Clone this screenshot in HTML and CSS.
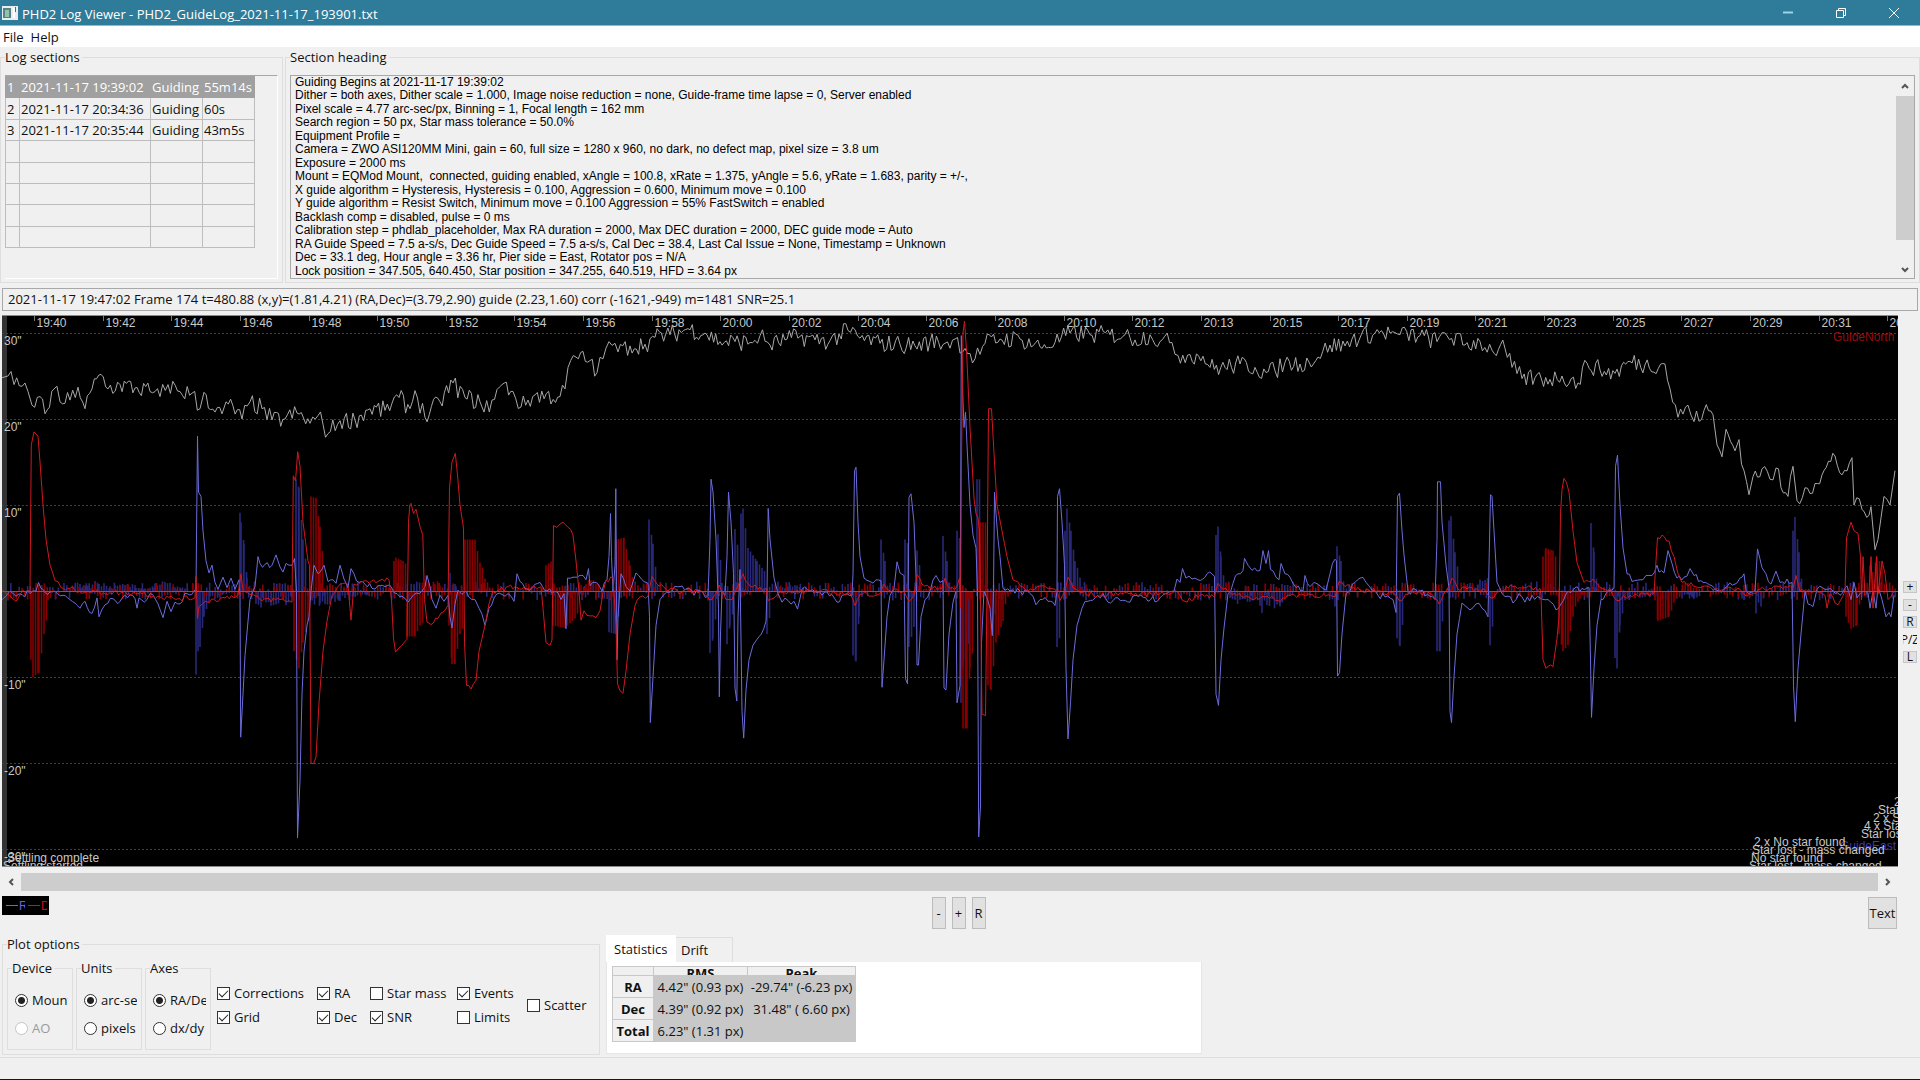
FILE: index.html
```html
<!DOCTYPE html>
<html lang="en">

<head>
    <meta charset="UTF-8">
    <meta name="viewport" content="width=device-width, initial-scale=1.0">
    <title>PHD2 Log Viewer</title>
    <link rel="stylesheet" href="styles.css">
</head>

<body>
    <header class="titlebar">
        <svg class="app-icon" width="16" height="16" viewBox="0 0 16 16">
            <rect x="0" y="1" width="16" height="14" fill="#e8eef0"/>
            <rect x="1" y="3" width="8" height="10" fill="#5c7f86"/>
            <rect x="3" y="5" width="4" height="7" fill="#8fc4a8"/>
            <rect x="11" y="3" width="2" height="10" fill="#fff"/>
            <rect x="13" y="2" width="1" height="5" fill="#4a6a78"/>
        </svg>
        <h1>PHD2 Log Viewer - PHD2_GuideLog_2021-11-17_193901.txt</h1>
        <div class="window-buttons">
            <button aria-label="Minimize"><svg width="12" height="12"><path d="M1 5.5h10" stroke="#9fd3e6" stroke-width="2"/></svg></button>
            <button aria-label="Restore"><svg width="12" height="12" fill="none" stroke="#fff"><path d="M3.5 3V1.5h7v7H9M1.5 3.5h7v7h-7z"/></svg></button>
            <button aria-label="Close"><svg width="12" height="12"><path d="M1 1l10 10M11 1L1 11" stroke="#fff"/></svg></button>
        </div>
    </header>

    <nav class="menubar">
        <a href="#file">File</a>
        <a href="#help">Help</a>
    </nav>

    <main>
        <div class="top-row">
            <fieldset class="group sections">
                <legend>Log sections</legend>
                <div class="sections-list">
                    <table class="sections-table">
                        <tr class="selected"><td>1</td><td>2021-11-17 19:39:02</td><td>Guiding</td><td>55m14s</td></tr>
                        <tr><td>2</td><td>2021-11-17 20:34:36</td><td>Guiding</td><td>60s</td></tr>
                        <tr><td>3</td><td>2021-11-17 20:35:44</td><td>Guiding</td><td>43m5s</td></tr>
                        <tr><td></td><td></td><td></td><td></td></tr>
                        <tr><td></td><td></td><td></td><td></td></tr>
                        <tr><td></td><td></td><td></td><td></td></tr>
                        <tr><td></td><td></td><td></td><td></td></tr>
                        <tr><td></td><td></td><td></td><td></td></tr>
                    </table>
                </div>
            </fieldset>

            <fieldset class="group heading">
                <legend>Section heading</legend>
                <div class="heading-box">
                    <div class="heading-text">
                        <p>Guiding Begins at 2021-11-17 19:39:02</p>
                        <p>Dither = both axes, Dither scale = 1.000, Image noise reduction = none, Guide-frame time lapse = 0, Server enabled</p>
                        <p>Pixel scale = 4.77 arc-sec/px, Binning = 1, Focal length = 162 mm</p>
                        <p>Search region = 50 px, Star mass tolerance = 50.0%</p>
                        <p>Equipment Profile =</p>
                        <p>Camera = ZWO ASI120MM Mini, gain = 60, full size = 1280 x 960, no dark, no defect map, pixel size = 3.8 um</p>
                        <p>Exposure = 2000 ms</p>
                        <p>Mount = EQMod Mount,&nbsp; connected, guiding enabled, xAngle = 100.8, xRate = 1.375, yAngle = 5.6, yRate = 1.683, parity = +/-,</p>
                        <p>X guide algorithm = Hysteresis, Hysteresis = 0.100, Aggression = 0.600, Minimum move = 0.100</p>
                        <p>Y guide algorithm = Resist Switch, Minimum move = 0.100 Aggression = 55% FastSwitch = enabled</p>
                        <p>Backlash comp = disabled, pulse = 0 ms</p>
                        <p>Calibration step = phdlab_placeholder, Max RA duration = 2000, Max DEC duration = 2000, DEC guide mode = Auto</p>
                        <p>RA Guide Speed = 7.5 a-s/s, Dec Guide Speed = 7.5 a-s/s, Cal Dec = 38.4, Last Cal Issue = None, Timestamp = Unknown</p>
                        <p>Dec = 33.1 deg, Hour angle = 3.36 hr, Pier side = East, Rotator pos = N/A</p>
                        <p>Lock position = 347.505, 640.450, Star position = 347.255, 640.519, HFD = 3.64 px</p>
                    </div>
                    <div class="vscroll">
                        <svg width="18" height="20"><path d="M6 12l3-3 3 3" fill="none" stroke="#555" stroke-width="2"/></svg>
                        <div class="vthumb"></div>
                        <svg width="18" height="20"><path d="M6 9l3 3 3-3" fill="none" stroke="#555" stroke-width="2"/></svg>
                    </div>
                </div>
            </fieldset>
        </div>

        <div class="frame-info">2021-11-17 19:47:02 Frame 174 t=480.88 (x,y)=(1.81,4.21) (RA,Dec)=(3.79,2.90) guide (2.23,1.60) corr (-1621,-949) m=1481 SNR=25.1</div>

        <div class="plot-row">
            <div class="plot-column">
                <div class="plot"><svg id="graph" class="graph"></svg></div>
                <div class="hscroll">
                    <svg width="19" height="18"><path d="M11 6L8 9l3 3" fill="none" stroke="#555" stroke-width="2"/></svg>
                    <div class="hthumb"></div>
                    <svg width="20" height="18"><path d="M8 6l3 3-3 3" fill="none" stroke="#555" stroke-width="2"/></svg>
                </div>
                <div class="toolbar">
                    <div class="legend-box">
                        <span class="legend-item ra">RA</span>
                        <span class="legend-item dec">Dec</span>
                    </div>
                    <div class="zoom-buttons">
                        <button class="btn">-</button>
                        <button class="btn">+</button>
                        <button class="btn">R</button>
                    </div>
                    <button class="btn btn-text">Text</button>
                </div>
            </div>
            <div class="side-buttons">
                <button>+</button>
                <button>-</button>
                <button>R</button>
                <button class="flat">P/Z</button>
                <button>L</button>
            </div>
        </div>

        <div class="bottom-row">
            <fieldset class="group options">
                <legend>Plot options</legend>
                <div class="options-body">
                    <fieldset class="group radios">
                        <legend>Device</legend>
                        <label><input type="radio" name="device" checked>Mount</label>
                        <label class="disabled"><input type="radio" name="device" disabled>AO</label>
                    </fieldset>
                    <fieldset class="group radios">
                        <legend>Units</legend>
                        <label><input type="radio" name="units" checked>arc-sec</label>
                        <label><input type="radio" name="units">pixels</label>
                    </fieldset>
                    <fieldset class="group radios">
                        <legend>Axes</legend>
                        <label><input type="radio" name="axes" checked>RA/Dec</label>
                        <label><input type="radio" name="axes">dx/dy</label>
                    </fieldset>
                    <div class="checks">
                        <label><input type="checkbox" checked>Corrections</label>
                        <label><input type="checkbox" checked>RA</label>
                        <label><input type="checkbox">Star mass</label>
                        <label><input type="checkbox" checked>Events</label>
                        <label class="scatter"><input type="checkbox">Scatter</label>
                        <label><input type="checkbox" checked>Grid</label>
                        <label><input type="checkbox" checked>Dec</label>
                        <label><input type="checkbox" checked>SNR</label>
                        <label><input type="checkbox">Limits</label>
                    </div>
                </div>
            </fieldset>

            <div class="notebook">
                <div class="tabs">
                    <button class="tab active">Statistics</button>
                    <button class="tab">Drift</button>
                </div>
                <div class="tab-panel">
                    <table class="stats">
                        <thead>
                            <tr><th></th><th><div>RMS</div></th><th><div>Peak</div></th></tr>
                        </thead>
                        <tbody>
                            <tr><th>RA</th><td>4.42" (0.93 px)</td><td>-29.74" (-6.23 px)</td></tr>
                            <tr><th>Dec</th><td>4.39" (0.92 px)</td><td>31.48" ( 6.60 px)</td></tr>
                            <tr><th>Total</th><td>6.23" (1.31 px)</td><td></td></tr>
                        </tbody>
                    </table>
                </div>
            </div>
        </div>
    </main>

    <footer class="statusbar"></footer>

    <script src="graph.js"></script>
</body>

</html>
```

FILE: styles.css
```css
:root {
    --face: #f0f0f0;
    --line: #dedede;
    --grey: #a8a8a8;
    --title: #2e7c9a;
}

* {
    box-sizing: border-box;
}

body {
    margin: 0;
    min-height: 100vh;
    display: flex;
    flex-direction: column;
    background: var(--face);
    font-family: 'Open Sans', 'Noto Sans', sans-serif;
    font-size: 13px;
    line-height: 20px;
    color: #111;
    overflow: hidden;
}

button {
    font: inherit;
    color: inherit;
    padding: 0;
    border: none;
    background: none;
}

svg {
    display: block;
}

/* title and menu */
.titlebar {
    height: 26px;
    display: flex;
    align-items: center;
    background: var(--title);
    border-bottom: 1px solid #8fbccc;
    padding-left: 2px;
}

.titlebar h1 {
    flex: 1;
    margin: 2px 0 0 4px;
    font-size: 13px;
    font-weight: 400;
    color: #fff;
}

.window-buttons {
    display: flex;
}

.window-buttons button {
    width: 53px;
    height: 25px;
    display: flex;
    align-items: center;
    justify-content: center;
}

.menubar {
    display: flex;
    gap: 7px;
    height: 21px;
    padding: 1px 0 0 3px;
    background: #fff;
}

.menubar a {
    color: #111;
    text-decoration: none;
}

main {
    flex: 1;
}

/* group boxes */
.group {
    min-width: 0;
    margin: 0;
    border: 1px solid var(--line);
    padding: 8px 4px 3px;
}

.group legend {
    height: 20px;
    padding: 0 2px 0 0;
}

.top-row {
    display: flex;
    gap: 2px;
}

.sections {
    width: 283px;
}

.heading {
    flex: 1;
}

.sections-list {
    height: 204px;
    border-top: 1px solid var(--grey);
    border-right: 1px solid #fff;
    border-bottom: 1px solid #fff;
}

.sections-table {
    width: 250px;
    height: 172px;
    table-layout: fixed;
    border-collapse: collapse;
    white-space: nowrap;
}

.sections-table td {
    height: 21px;
    border: 1px solid #bdbdbd;
    padding: 0 1px;
    line-height: 18px;
}

.sections-table td:nth-child(1) {
    width: 14px;
}

.sections-table td:nth-child(2) {
    width: 131px;
}

.sections-table td:nth-child(3) {
    width: 52px;
}

.sections-table .selected td {
    background: #a0a0a0;
    border-color: #a0a0a0;
    color: #fff;
}

.heading-box {
    display: flex;
    height: 204px;
    border: 1px solid var(--grey);
}

.heading-text {
    flex: 1;
    display: grid;
    grid-auto-rows: 1fr;
    padding-left: 4px;
    font-family: 'Liberation Sans', Arial, sans-serif;
    font-size: 12px;
    line-height: 13px;
    white-space: nowrap;
    color: #000;
}

.heading-text p {
    margin: 0;
}

.vscroll {
    width: 18px;
}

.vthumb {
    height: 144px;
    background: #cdcdcd;
}

.vscroll svg:last-child {
    margin-top: 19px;
}

.frame-info {
    height: 23px;
    margin: 5px 2px 4px;
    padding-left: 5px;
    border: 1px solid var(--grey);
    line-height: 21px;
}

/* graph */
.plot-row {
    display: flex;
    align-items: center;
    padding: 0 3px 0 2px;
}

.plot-column {
    flex: 1;
    min-width: 0;
}

.plot {
    border-top: 1px solid #8a8a8a;
    border-bottom: 1px solid #8a8a8a;
    background: #000;
}

.graph {
    width: 100%;
    height: 550px;
    font-family: 'Liberation Sans', Arial, sans-serif;
    font-size: 12px;
}

.hscroll {
    display: flex;
    margin: 6px 0 5px;
}

.hthumb {
    flex: 1;
    background: #cdcdcd;
}

.toolbar {
    display: flex;
    justify-content: space-between;
    align-items: flex-start;
    height: 33px;
    padding-right: 1px;
}

.legend-box {
    display: flex;
    gap: 3px;
    width: 47px;
    height: 19px;
    padding-left: 4px;
    background: #000;
    font-family: 'Liberation Sans', Arial, sans-serif;
    font-size: 12px;
    overflow: hidden;
}

.legend-item {
    display: flex;
    align-items: center;
    flex: none;
    width: 19px;
    overflow: hidden;
}

.legend-item::before {
    content: "";
    flex: none;
    width: 12px;
    height: 1px;
    margin-right: 1px;
    background: currentColor;
}

.ra {
    color: #6464e6;
}

.dec {
    color: #c81414;
}

.zoom-buttons {
    display: flex;
    gap: 6px;
}

.btn {
    width: 14px;
    height: 32px;
    margin-top: 1px;
    background: #e1e1e1;
    border: 1px solid #bcbcbc;
}

.btn-text {
    width: 29px;
}

.side-buttons {
    display: flex;
    flex-direction: column;
    justify-content: space-between;
    width: 14px;
    height: 82px;
    margin-left: 5px;
}

.side-buttons button {
    display: flex;
    align-items: center;
    justify-content: center;
    height: 12px;
    background: #e1e1e1;
    border: 1px solid #c6c6c6;
    font-size: 12px;
    line-height: 12px;
    overflow: hidden;
}

.side-buttons .flat {
    background: none;
    border: none;
}

/* options */
.bottom-row {
    display: flex;
    gap: 6px;
    padding: 5px 2px 1px;
}

.options {
    width: 598px;
    height: 121px;
    padding-top: 4px;
}

.options-body {
    display: flex;
    align-items: center;
    gap: 3px;
}

.radios {
    display: flex;
    flex-direction: column;
    gap: 10px;
    width: 66px;
    height: 92px;
    padding-top: 13px;
}

.radios label,
.checks label {
    display: flex;
    align-items: center;
    line-height: 18px;
    white-space: nowrap;
}

.radios label {
    margin-left: 3px;
    overflow: hidden;
}

.radios .disabled {
    color: #9a9a9a;
}

input {
    appearance: none;
    flex: none;
    width: 13px;
    height: 13px;
    margin: 0 4px 0 0;
    background: #fff;
    border: 1px solid #333;
}

input[type="radio"] {
    border-radius: 50%;
}

input[type="radio"]:checked {
    background: radial-gradient(circle, #222 3px, #fff 4px);
}

input:disabled {
    border-color: #c4c4c4;
}

input[type="checkbox"]:checked::after {
    content: "";
    display: block;
    width: 8px;
    height: 4px;
    margin: 2px 0 0 1px;
    border-left: 1px solid #222;
    border-bottom: 1px solid #222;
    transform: rotate(-45deg);
}

.checks {
    display: grid;
    grid-template-columns: 100px 53px 87px 70px auto;
    row-gap: 6px;
    margin: 2px 0 0 3px;
}

.scatter {
    grid-column: 5;
    grid-row: 1 / span 2;
}

.notebook {
    width: 596px;
}

.tabs {
    display: flex;
    align-items: flex-end;
    height: 28px;
}

.tab {
    width: 57px;
    height: 25px;
    padding-left: 5px;
    border: 1px solid var(--line);
    border-left: none;
    border-bottom: none;
    text-align: left;
}

.tab.active {
    width: 70px;
    height: 27px;
    padding-left: 8px;
    border: none;
    background: #fff;
}

.tab-panel {
    height: 92px;
    padding: 4px 5px;
    background: #fff;
    border: 1px solid #e6e6e6;
    border-top: none;
}

.stats {
    width: 244px;
    table-layout: fixed;
    border-collapse: collapse;
    text-align: center;
    white-space: nowrap;
}

.stats th,
.stats td {
    height: 22px;
    padding: 0;
    border: 1px solid #c8c8c8;
    line-height: 20px;
}

.stats th {
    background: var(--face);
}

.stats th:nth-child(1) {
    width: 41px;
}

.stats th:nth-child(2) {
    width: 94px;
}

.stats td {
    background: #c8c8c8;
}

.stats thead th {
    height: 9px;
}

.stats thead div {
    height: 8px;
    line-height: 12px;
    overflow: hidden;
}

.statusbar {
    height: 23px;
    border-top: 1px solid var(--line);
    border-bottom: 1px solid #111820;
}
```

FILE: graph.js
```js
const NS = 'http://www.w3.org/2000/svg';
const graph = document.getElementById('graph');

const LEFT = 2;         // frame position of the left edge
const ZERO_Y = 275;     // y of the 0" line
const SCALE = 8.6;      // pixels per arc-second
const FRAME = 1.4;      // pixels per guide frame

const toX = x => (x - LEFT).toFixed(1);
const toY = v => (ZERO_Y - v * SCALE).toFixed(1);

// small repeatable generator for frame to frame jitter
let seed = 7;
function jitter() {
    seed = (seed * 16807) % 2147483647;
    return seed / 2147483647 * 2 - 1;
}

function add(name, attrs, text) {
    const el = document.createElementNS(NS, name);
    for (const key in attrs) el.setAttribute(key, attrs[key]);
    if (text) el.textContent = text;
    graph.appendChild(el);
}

const toPairs = s => s.trim().split(/\s+/).map(p => p.split(',').map(Number));

// guide star SNR
const snr = `2,24.8 8,25 14,24 22,23.8 28,23.2 32,21.6 40,22.6 45,20.6 54,23.5 60,22 70,22.2 78,23.7 85,21.2 92,23.5
101,25.2 108,23.5 120,24 135,23.6 150,23.2 160,22.6 168,24 180,23.2 192,23 200,21.2 204,23.1 215,20.8 222,20.6 226,22
242,20 250,22 262,21.2 272,19.9 285,20 297,20.7 310,19.5 318,20.4 328,18.3 340,19.8 355,19.9 370,21.2 385,21 399,22.5
410,21.2 415,23.3 425,20.2 440,22 453,24.2 465,22.5 480,22 484,20.8 492,22.2 502,24 513,23.2 521,21.4 535,22.8 560,22.6
565,23.5 568,26 576,27.2 590,26.8 597,25.4 603,27 609,29 615,28.8 618,27.8 630,28.5 645,28.7 655,29.5 670,29.8 688,30.5
705,30 720,29 735,29 750,28.9 760,29.7 770,28.6 785,29.2 800,29.6 815,29.2 830,29.1 848,30.3 860,29.4 880,28.8 900,28.7
915,28.5 930,29 945,28.8 955,29.3 965,28.2 975,27 985,28.8 1000,29.3 1020,29.3 1040,28.4 1055,28.9 1070,30 1090,29.8
1110,29.8 1125,29.8 1135,29.2 1150,29.8 1160,29 1172,28.9 1178,27.4 1190,27.5 1203,27.3 1210,26 1225,26 1240,26.4
1255,26 1266,25.4 1275,25.6 1285,26.6 1300,26.4 1318,27.2 1330,28.6 1345,28.5 1352,29.3 1375,30 1390,30 1400,29.8
1420,29.7 1437,29 1445,30 1465,28.6 1480,29 1492,28 1505,28.2 1512,26 1522,24.7 1535,24.8 1550,24.6 1562,25 1578,24.2
1587,26.5 1600,25.7 1615,25.3 1630,26.7 1645,26.3 1665,26.4 1670,23.5 1678,20.2 1688,21.6 1694,19.7 1704,21 1713,20.5
1717,17 1722,15.6 1726,18.8 1735,16.3 1739,17.6 1744,14 1749,11.2 1753,13.3 1762,14.2 1770,13 1776,14.3 1781,12
1788,11 1793,14.5 1797,10.5 1805,12 1815,12.5 1822,13.5 1835,15.7 1842,13.5 1852,15.5 1854,10 1862,9.5 1869,8.8 1871,9.8
1875,4.8 1878,6 1884,11 1890,10 1895,14`;

// RA error
const ra = `2,-1 6,-.6 10,0 16,-.6 22,-.4 30,-.3 36,0 38.5,1 41,.3 50,-.1 55,0 63,-.5 70,-1 80,-2 85,-1.2 92,-2.6 97,-.8
99,-3 105,-1.6 113,-.9 120,-1.2 125,-.5 135,-.9 137,-2 139,-.8 147,-1 150,-.3 158,-1.5 163,-3.1 167,-1.2 171,-2.4
175,-1.3 180,-1.5 187,-.3 194,0 196,.2 197.5,18 198.5,11.5 201,11 203,7 206,3.5 209,2.1 212,3 215,1 218,.2 223,1.6
227,.4 231,1.5 235,.2 239,1.3 240,-.5 240.7,-17 243,-12 245,-7.5 248,-3.5 250,-1 253,0 255,.5 258,4 260,3.2 265,3.1
272,3 276,4.2 280,2.8 283,2.2 286,3.2 292,3 294.5,3.8 296.5,0 297.5,-28.7 300,-22 302,-12 304,-7 307,-4 309,-3 311,0
314,3 318,2 324,3 328,1.1 333,1.3 336,.9 340,3 344,1.4 348,.4 351,2.6 354,2 359,1 365,.8 372,.3 378,.6 385,.5 392,.3
397,-.3 402,-.6 408,-1.3 414,-.4 422,0 425,.5 427,1.8 430,.5 432,-1 436,-2 440,-.5 444,-1.2 448,-.5 450,-3 452,-4.3
455,-1.5 458,.1 462,-.4 466,0 472,-1 475,-1 479,-2 482,-2.7 485,-4 489,-2 494,-.8 502,-.4 508,-.3 514,-1.2 517,2
520,1.1 525,.3 532,.3 540,1 547,0 555,0 561,-1 564,-.3 566,-4.4 567.5,1.5 573,1.6 577,1.6 583,1.8 586,1.3 588.5,2.6
590,.6 595,1 602,0 607,1.3 609,4 610.5,9 611.5,4 613,0 615,3 615.8,11.9 617,-8 618,-3 621,2 626,.5 630,0 636,2.1
644,1.1 648,.9 649.5,-3 650.3,-15.3 653,-10 656,-4 660,-1 664,-.4 672,0 680,.5 687,.3 694,-.5 700,0 708,-.6 710,6
711,13 713,11.5 716,6 718.5,-2 719.3,-12.3 720.5,-5 722,0 725,-.5 727,4 728.5,11.5 731,8 733.5,2 735,-11.3 736.8,-12.8
738,-3 740,2.5 742,-14 743.7,-17.1 746,-11.5 749,-8 753,-6.3 759,-5.3 766,-3.5 767,0 768.2,9.6 770,6 774,1.5 778,-.3
782,-1.3 788,-1.1 794,-1.2 797.5,-2.1 802,.2 810,0 822,-.5 832,-.4 837,-1.3 842,-.5 852,-.5 853,2 854.5,14 856,14.4
858,8 860,4 864,1.5 870,1.1 876,1.3 881,1.2 882,-11.2 884,-8 887,-3 890,-.5 894,.3 897,3.4 900,2.1 904,1.8 905.5,-10.2
907.5,-10.8 909,10.9 911,11.3 914,8 916.5,0 917,-8.6 918.5,-8.6 921,-3 925,-1 930,0 936,1.8 940,1 943,1.2 944,-11.3
946,-11.5 949,-5 953,-1.3 956,0 957,-13 960,-11 961.3,29.7 963,22 964,19 965.5,20.8 967,17 970,10 973,6.5 976,5
977.5,0 978.7,-28.6 980.5,-25 981.5,-6 984,0 987,-.8 990,-2 992.3,-5.2 993.5,0 994.5,11.5 996,9 998,6 1000,4 1003,.3
1010,0 1020,0 1030,-.3 1036,-1.6 1040,-1 1048,-1.2 1055,-1.7 1057,0 1057.5,11 1059.5,11.9 1062,8 1064.5,3 1066,-9
1068,-17.2 1070.5,-13 1073,-8 1077,-4 1082,-2 1088,-1.2 1095,-.8 1103,-.3 1108,-1.3 1118,-.8 1130,-1.3 1136,-.5
1148,-1.2 1160,-.8 1174,0 1177,1.4 1180,1 1182.5,2.6 1186,1.5 1192,1.4 1198,1.3 1205,1.6 1212,2 1214.5,1.7 1216,-12
1218.5,-13.3 1221,-8 1224,-4.3 1228,-.3 1233,.9 1238,2 1243,2.4 1244.5,3.8 1248,3 1252,2.4 1260,2.4 1263,4.7 1266,3.2
1268.5,4.7 1270.5,2.5 1276,1.6 1279,1.3 1281,3.2 1285,2 1290,1.6 1296,.4 1303,0 1305,1.8 1310,.5 1314,1 1320,.6
1326,.1 1330,2 1335,3.7 1336.5,3.5 1337.5,-9.9 1339.5,-9.5 1342,-5 1346,-.3 1350,0 1355,1 1360,1.5 1366,1 1372,.1
1378,-.5 1385,-.7 1393,-1 1396,-2.5 1397.5,11 1399.5,11.4 1402,7 1404,4.2 1408,0 1420,0 1430,-.6 1435,-1 1437,6
1437.5,12.7 1440.5,12.7 1442,8 1446,3 1449,.3 1450,-14 1451.5,-15.3 1454,-10 1457,-5 1462,-1.4 1466,-1.8 1470,-2.2
1476,-1.5 1482,-2 1488,-3 1489,3 1490.5,11.2 1492,11 1495,5 1497,1 1502,-.3 1508,-.6 1513,-1.4 1519,-.3 1525,-1.3
1532,-.5 1540,-.8 1548,-1 1556,-2.2 1561,-1.5 1568,0 1575,.4 1582,.3 1589,.4 1590.5,-8 1591.5,-14.7 1594,-9 1597,-4
1601,-1 1608,0 1614,.3 1615.5,14.5 1617.5,15.8 1620,10 1623,5 1627,2 1632,1.1 1640,1.3 1646,1.8 1652,1.8 1657,3
1659,2.2 1664,2.1 1668,4.7 1672,3.2 1677,1.5 1684,1.6 1690,2.6 1694,1.8 1703,1 1712,.6 1719,0 1727,.5 1735,.8
1742,1.6 1744,2 1746,0 1749,-.3 1755,0 1757.5,4.9 1762,2.7 1766,2 1771,.8 1776,2.3 1780,1 1787,1.4 1792,1 1793.5,-11
1795.3,-15.2 1798,-9 1801,-5 1805,0 1808,-1.5 1813,-1.8 1817,.2 1825,.2 1833,0 1840,-.5 1847,.6 1851,-1 1854,1
1857,-.8 1860,-.3 1864,0 1868,-.2 1870,-2 1873,0 1876,-2 1878,.5 1882,-1 1886,-3 1889,-2.5 1891,-3 1894,-.5`;

// Dec error
const dec = `2,.2 8,-.4 12,-.8 16,-1.2 21,-.2 30,0 31.3,17 34,18.5 38,18 40,15 43,10 46,6 50,3 55,1.2 61,.4 70,.3 80,0
110,-.2 140,-.2 160,-.7 180,-.9 195,-.8 196,1.7 197.5,-3.2 199,-1.8 205,-1.2 225,-.8 238,-.4 241,2 243,0 260,-1 280,-1
292,-1.3 293.3,13.4 295.5,12.8 297.7,16.2 300,14.5 303,8 308,3.5 309.5,3 311,-20 313.5,-20.1 316,-19.3 319,-13 323,-7
327,-3.5 332,-.5 340,.8 348,.7 351,-3.4 354,.8 365,1.2 378,1.1 389,1.3 391.5,-1 393.5,-5.5 395.5,-7.1 399,-6.6 404,-6
407,-5.6 408.5,8 409.8,10 411,10.2 413.5,9 416,9.5 420,7.5 422.8,6.5 424.5,-1 427,-3.6 431,-3.9 438,-3.2 444,-2.4
448,-1.7 449.5,12 452,15 455.3,16 457.5,13.5 460,10 463.5,7.3 464.5,-6 466.5,-11 471,-11.4 476,-10.4 479,-7 485,-4
489,-1.5 493,0 515,.5 530,.2 541,.5 543,-2 546,-6 550,-6.3 552,-5.7 553.5,7.6 557,7.4 563,8 568,7.4 573,6.5 576,3.5
579,0 581,-3.4 584,-2.3 590,-2.9 596,-3.1 600,-2.3 603,-.2 606,1.3 613,1.5 616,-4 617.5,-10.8 620,-11.6 623,-11.9
626,-9.3 630,-5 635,-1.7 640,-.7 648,-.6 652,1.7 657,.8 668,0 700,0 709,-1 712,-1 719,.7 726,-1 732,-1 743,2 748,.9
760,.4 766,.3 768,-1.1 773,-.9 778,-.3 810,0 850,-.3 855,-1.7 860,-.4 880,-.3 884,.8 890,0 904,0 909,-1.2 914,-.5
917,1.9 922,.8 930,.3 942,.3 945,1.5 950,.3 957,.5 959.5,1.5 960.5,-2 961.5,15 963,30 964.5,31.4 966.5,28 970,19
974,10.8 976,9 978,8.5 979.5,7 981,-5 982,-14.3 985.5,-14.5 987,0 988.5,21.2 991.5,21.2 994,16 997,10 1002,7 1007,4
1013,1.3 1020,.6 1028,0 1042,.6 1055,.2 1060,-1.1 1065,0 1068,1.6 1073,.4 1082,-.2 1100,-.6 1120,-.2 1140,-.4
1160,-.3 1175,0 1185,-1.2 1200,-.5 1214,-.7 1218,.9 1223,.2 1235,-.3 1250,-.8 1265,-.7 1278,-1.1 1290,-.5 1310,-.4
1335,-.7 1339,1.1 1345,.5 1360,.1 1380,0 1394,-.3 1399,-1.1 1410,0 1430,-.3 1439,-1.5 1446,0 1452,1.5 1458,.2
1485,.1 1491,-.8 1500,0 1515,.6 1540,.3 1541,-.5 1543,-8 1546,-9 1553,-8.8 1557,-5.5 1559,-3 1560.5,9 1562,11.8
1564,13.1 1569,11.5 1573,7 1577,3.3 1584,1 1593,1.4 1600,.4 1610,.3 1617,-1.1 1630,-.5 1654,-.3 1656,3.5 1657.5,6.2
1662,6.5 1669,5.8 1674,4 1678,2 1682,1 1700,.4 1715,.2 1740,.2 1745,-.5 1760,.2 1785,.5 1793,.3 1796,1.8 1800,0
1815,0 1825,-.5 1827,-2 1830,-.3 1838,-1.6 1845,0 1846.5,6.2 1851,8 1854,7 1858,6.7 1860.5,4 1861.5,-1 1863,4
1865,-.5 1869,0 1871,4 1873,-2 1876.5,4 1878,-.3 1882,3.5 1885,2 1888,-1 1894,0`;

// guide pulses, one run of bars per line
const raPulses = `70,.5 80,1.1 90,.8 99,1.6 110,.6 136,1 145,.4 160,1.4 175,.8 190,.3
196,-9.7 198,-7 200,-6.5 204,-3 210,-1 225,-.8
240,9.1 241,8 244,5.5 247,1.5 250,.5
256,-2 292,-1.8
296,13 299,12 303,6 308,1.5
312,-1.5 320,-1.7 345,-1.3 370,-.4
450,2.3 456,1
568,-.7 590,-1
609,-4.8 616,-5 621,-1
649,8.3 653,5.5 657,1.2
710,-7.2 713,-5.5 717,-2
718,6.6 721,3
727,-6.2 730,-4 734,-2
735,7.2 738,5
741,9 743,9.6 748,5 757,3.5 766,2
767,-5 771,-2
780,.5 797,1.1 802,.4
853,-7.5 856,-8.2 859,-3 862,-.7
881,6 885,3.5 889,.7
905,6 908,5.5
909,-6.5 914,-4.2 917,-2
917,4.7 921,2
943,6.4 947,3.5 950,.8
957,7 960,6
961,-13 963,-9 966,-8 970,-5
977,13 981,13
993,-4 997,-2
1057,-6.5 1062,-4.5
1065,7 1067,9.6 1071,7 1075,3.5 1082,1.3 1090,.5
1216,6.5 1218,7.5 1221,4 1225,1
1230,-1 1245,-2 1262,-2.5 1280,-1.8 1295,-.5
1330,-1 1336,-2.2
1337,5.2 1341,3.5 1344,1
1397,-5.5 1400,-6.4 1404,-2.5
1437,-7 1440,-7 1444,-1.5
1449,8.2 1451,8.7 1455,4.5 1460,1.2
1465,.8 1488,1.6
1490,-6.3 1495,-2
1591,7.9 1594,4.5 1598,1
1615,-7.8 1617,-9 1620,-4 1625,-1.2 1655,-1
1682,-1.2 1700,-.7
1742,-1 1745,-1
1756,-2.6 1765,-1.2
1793,7 1795,8.6 1799,4.5 1803,1`;

const decPulses = `31,-8 33,-10 39,-9.5 44,-5 48,-2.5 53,-.7
294,-7 299,-9 303,-6 309,-3
311,11 316,10.8 320,7.5 324,3
394,3.5 396,3.9 403,3.5 407,3
407,-5.3 415,-5.3 420,-4 424,-3.5
426,1.8 435,1.5 443,1
449,-4 452,-8.5 455,-8.5 460,-5 464,-4
465,6 475,6 480,3.3 490,.8
546,3 552,3.5
553,-4 565,-4.3 575,-3.2 580,-2
581,1.3 600,1.4
616,6 624,6.2 630,3 634,1
961,-10 963,-16 967,-16 970,-9 975,-5.6
978,8 987,8
988,-11 991,-11.5 996,-6 1003,-3.5 1011,-.5
1543,4 1546,5 1553,4.7 1558,3.3
1559,-5 1563,-7 1568,-6.3 1573,-3 1580,-1 1588,-.3
1655,-2 1658,-3.5 1669,-3 1678,-.8
1846,-3 1851,-4.4 1857,-4 1862,-1
1870,3 1873,2 1877,4 1882,3 1886,1`;

function drawTrace(data, color, noise, quiet) {
    const pts = toPairs(data);
    let d = 'M' + toX(pts[0][0]) + ' ' + toY(pts[0][1]);
    for (let i = 1; i < pts.length; i++) {
        const [x0, v0] = pts[i - 1];
        const [x1, v1] = pts[i];
        const steps = Math.floor((x1 - x0) / (FRAME * 1.5));
        for (let s = 1; s < steps; s++) {
            const v = v0 + (v1 - v0) * s / steps;
            const amp = Math.abs(v1 - v0) < quiet ? noise : 0;
            d += 'L' + toX(x0 + (x1 - x0) * s / steps) + ' ' + toY(v + jitter() * amp);
        }
        d += 'L' + toX(x1) + ' ' + toY(v1);
    }
    add('path', { d, fill: 'none', stroke: color, 'stroke-width': 1 });
}

function drawPulses(data, color, idle) {
    let d = '';
    for (let x = 8; x < 1896; x += 2.8) {
        const v = jitter() * idle;
        d += 'M' + toX(x) + ' ' + ZERO_Y + 'V' + toY(v);
    }
    for (const line of data.split('\n')) {
        const run = toPairs(line);
        for (let i = 1; i < run.length; i++) {
            const [x0, v0] = run[i - 1];
            const [x1, v1] = run[i];
            for (let x = x0; x < x1; x += 2.5) {
                let v = v0 + (v1 - v0) * (x - x0) / (x1 - x0);
                // weak pulses vary from frame to frame
                if (Math.abs(v) < 2.6) v *= 0.7 + jitter() * 0.35;
                d += 'M' + toX(x) + ' ' + ZERO_Y + 'V' + toY(v);
            }
        }
    }
    add('path', { d, fill: 'none', stroke: color, 'stroke-width': 1.6 });
}

// settling period
add('rect', { x: 0, y: 0, width: 5, height: 551, fill: '#333' });

// grid
for (let v = -30; v <= 30; v += 10) {
    if (v === 0) continue;
    const y = Math.round(ZERO_Y - v * SCALE) + 0.5;
    add('line', { x1: 0, x2: '100%', y1: y, y2: y, stroke: '#404040', 'stroke-dasharray': '2 2' });
    add('text', { x: 2, y: y + 11.5, fill: '#c8c8c8' }, v + '"');
}

// time axis
const times = ['19:40', '19:42', '19:44', '19:46', '19:48', '19:50', '19:52', '19:54', '19:56', '19:58',
    '20:00', '20:02', '20:04', '20:06', '20:08', '20:10', '20:12', '20:13', '20:15', '20:17', '20:19',
    '20:21', '20:23', '20:25', '20:27', '20:29', '20:31', '20:33'];
times.forEach((label, i) => {
    const x = 32.5 + Math.round(i * 68.64);
    add('line', { x1: x, x2: x, y1: 0, y2: 5, stroke: '#777' });
    add('text', { x: x + 2, y: 11, fill: '#c8c8c8' }, label);
});

drawPulses(raPulses, '#28287a', 1.1);
drawPulses(decPulses, '#880000', 1);
drawTrace(snr, '#a8a8a8', 1.1, 4);
drawTrace(ra, '#6c6cdc', 0.4, 2);
drawTrace(dec, '#d01820', 0.3, 2);
add('line', { x1: 0, x2: '100%', y1: ZERO_Y + 0.5, y2: ZERO_Y + 0.5, stroke: '#b04050' });

// guide directions and events
add('text', { x: 1831, y: 25, fill: '#960c0c' }, 'GuideNorth');
add('text', { x: 1838, y: 534, fill: '#3a3aa8' }, 'GuideEast');
const events = [
    [5, 546, 'Settling complete'],
    [1, 554, 'Settling started'],
    [1747, 554, 'Star lost - mass changed'],
    [1749, 546, 'No star found'],
    [1750, 538, 'Star lost - mass changed'],
    [1752, 530, '2 x No star found'],
    [1859, 522, 'Star lost - mass changed'],
    [1862, 514, '4 x Star lost - mass changed'],
    [1871, 506, '2 x Star lost - mass changed'],
    [1876, 498, 'Star lost - mass changed'],
    [1892, 490, '2 x No star found']
];
for (const [x, y, text] of events) {
    add('text', { x, y, fill: '#c8c8c8' }, text);
}
```
